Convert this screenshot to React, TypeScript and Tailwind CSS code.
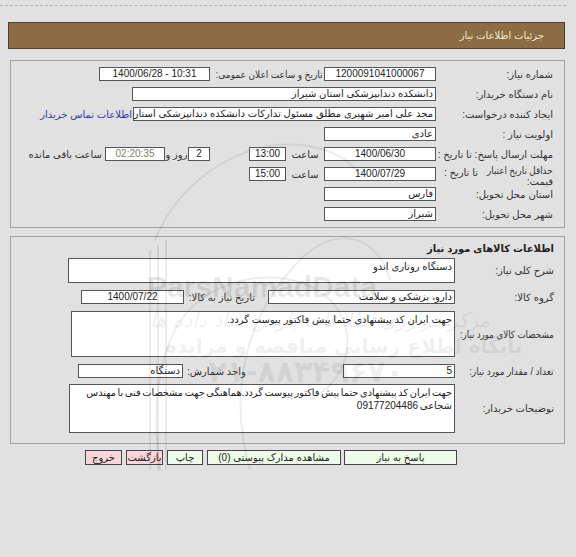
import React from "react";

type P = { className?: string; children?: React.ReactNode };

function Inp({ className = "", children }: P) {
  return (
    <div
      className={`h-[14px] shrink-0 overflow-hidden whitespace-nowrap border border-[#555] bg-white px-[2px] text-[10px] leading-[12px] text-[#222] ${className}`}
    >
      {children}
    </div>
  );
}

function L1({ children }: P) {
  return <div className="w-[117px] shrink-0 whitespace-nowrap text-right">{children}</div>;
}

function L2({ children }: P) {
  return <div className="w-[99px] shrink-0 whitespace-nowrap text-right">{children}</div>;
}

function Sq({ className = "", children }: P) {
  return <span className={`inline-block origin-right whitespace-nowrap ${className}`}>{children}</span>;
}

function Btn({ className = "", children }: P) {
  return (
    <div
      className={`h-[15px] shrink-0 whitespace-nowrap border border-[#444] text-center text-[10px] leading-[13px] text-[#222] ${className}`}
    >
      {children}
    </div>
  );
}

export default function App() {
  return (
    <div
      dir="rtl"
      className="relative h-[557px] w-[576px] overflow-hidden bg-[#e1e1e1] font-['Liberation_Sans','DejaVu_Sans',sans-serif] text-[10px] leading-[13px] text-[#333]"
    >
      <div className="pt-[5px]">
        <div className="mr-auto w-[566px] border-t border-dashed border-[#b0b0b0]" />
      </div>

      <div className="ml-[8px] mr-[11px] mt-[16px] flex h-[27px] items-center border border-[#4f4030] bg-[#8c6d43] pr-[20px] text-[10px] text-[#f3e9d2]">
        جزئیات اطلاعات نیاز
      </div>

      {/* section 1 */}
      <div className="ml-[10px] mr-[11px] mt-[11px] border border-[#a0a0a0] pb-[3px] pr-[11px] pt-[3px]">
        <div className="flex h-[20px] items-center">
          <L1>شماره نیاز:</L1>
          <Inp className="w-[112px] text-center">1200091041000067</Inp>
          <div className="mr-[2px] w-[110px] shrink-0 whitespace-nowrap text-right">
            <Sq className="scale-x-[0.9]">تاریخ و ساعت اعلان عمومی:</Sq>
          </div>
          <Inp className="mr-[2px] w-[111px] text-center">
            <span dir="ltr">1400/06/28 - 10:31</span>
          </Inp>
        </div>
        <div className="flex h-[20px] items-center">
          <L1>نام دستگاه خریدار:</L1>
          <Inp className="w-[304px] text-right">دانشکده دندانپزشکی استان شیراز</Inp>
        </div>
        <div className="flex h-[20px] items-center">
          <L1>ایجاد کننده درخواست:</L1>
          <Inp className="w-[303px] text-right">مجد علی امیر شهیری مطلق مسئول تدارکات دانشکده دندانپزشکی استان شیراز</Inp>
          <div className="mr-[1px] shrink-0 whitespace-nowrap text-[#3535b0]">اطلاعات تماس خریدار</div>
        </div>
        <div className="flex h-[20px] items-center">
          <L1>اولویت نیاز :</L1>
          <Inp className="w-[112px] text-right">عادی</Inp>
        </div>
        <div className="flex h-[20px] items-center">
          <L1>مهلت ارسال پاسخ: تا تاریخ :</L1>
          <Inp className="w-[112px] text-center">1400/06/30</Inp>
          <div className="w-[38px] shrink-0 text-center">ساعت</div>
          <Inp className="w-[37px] text-center">13:00</Inp>
          <Inp className="mr-[39px] w-[22px] text-center">2</Inp>
          <div className="w-[23px] shrink-0 whitespace-nowrap text-center">روز و</div>
          <Inp className="w-[60px] bg-[#efedc2] text-center text-[#808070]">02:20:35</Inp>
          <div className="mr-[3px] shrink-0 whitespace-nowrap">ساعت باقی مانده</div>
        </div>
        <div className="flex h-[20px] items-center">
          <div className="flex w-[117px] shrink-0 items-start">
            <div className="w-[70px] shrink-0 whitespace-nowrap pt-[3px] text-right leading-[11px]">
              <Sq className="scale-x-[0.88]">حداقل تاریخ اعتبار</Sq>
              <br />
              قیمت:
            </div>
            <div className="mr-[5px] shrink-0 whitespace-nowrap pt-[4px]">تا تاریخ :</div>
          </div>
          <Inp className="w-[112px] text-center">1400/07/29</Inp>
          <div className="w-[38px] shrink-0 text-center">ساعت</div>
          <Inp className="w-[37px] text-center">15:00</Inp>
        </div>
        <div className="flex h-[20px] items-center">
          <L1>استان محل تحویل:</L1>
          <Inp className="w-[112px] text-right">فارس</Inp>
        </div>
        <div className="flex h-[20px] items-center">
          <L1>شهر محل تحویل:</L1>
          <Inp className="w-[112px] text-right">شیراز</Inp>
        </div>
      </div>

      {/* section 2 */}
      <div className="ml-[10px] mr-[11px] mt-[8px] border border-[#a0a0a0] pb-[10px] pr-[10px] pt-[5px]">
        <div className="h-[14px] text-right font-bold leading-[14px] text-[#222]">اطلاعات کالاهای مورد نیاز</div>
        <div className="mt-[2px] flex items-center">
          <L2>شرح کلی نیاز:</L2>
          <div className="h-[25px] w-[387px] shrink-0 overflow-hidden border border-[#555] bg-white px-[2px] pt-[1px] text-right leading-[13px] text-[#222]">
            دستگاه روتاری اندو
          </div>
        </div>
        <div className="mt-[7px] flex items-center">
          <L2>گروه کالا:</L2>
          <Inp className="w-[187px] text-right">دارو، پزشکی و سلامت</Inp>
          <div className="w-[84px] shrink-0 whitespace-nowrap pr-[13px] text-right">تاریخ نیاز به کالا:</div>
          <Inp className="w-[103px] text-center">1400/07/22</Inp>
        </div>
        <div className="mt-[7px] flex items-center">
          <L2>
            <Sq className="scale-x-[0.87]">مشخصات کالای مورد نیاز:</Sq>
          </L2>
          <div className="h-[46px] w-[384px] shrink-0 overflow-hidden border border-[#555] bg-white px-[2px] pt-[1px] text-right leading-[13px] text-[#222]">
            جهت ایران کد پیشنهادی حتما پیش فاکتور پیوست گردد.
          </div>
        </div>
        <div className="mt-[7px] flex items-center">
          <L2>
            <Sq className="scale-x-[0.9]">تعداد / مقدار مورد نیاز:</Sq>
          </L2>
          <Inp className="w-[112px] text-right">5</Inp>
          <div className="w-[160px] shrink-0 whitespace-nowrap pl-[4px] text-left">واحد شمارش:</div>
          <Inp className="w-[105px] text-right">دستگاه</Inp>
        </div>
        <div className="mt-[6px] flex items-center">
          <L2>توضیحات خریدار:</L2>
          <div className="h-[49px] w-[386px] shrink-0 overflow-hidden whitespace-nowrap border border-[#555] bg-white px-[2px] pt-[1px] text-right leading-[13px] text-[#222] [word-spacing:-1px]">
            <Sq className="scale-x-[0.97]">جهت ایران کد پیشنهادی حتما پیش فاکتور پیوست گردد.هماهنگی جهت مشخصات فنی با مهندس</Sq>
            <br />
            شجاعی 09177204486
          </div>
        </div>
      </div>

      {/* buttons */}
      <div className="mt-[6px] flex pr-[119px]">
        <Btn className="w-[113px] bg-[#eefbea]">پاسخ به نیاز</Btn>
        <Btn className="mr-[3px] w-[134px] bg-[#eefbea]">مشاهده مدارک پیوستی (0)</Btn>
        <Btn className="mr-[4px] w-[36px] bg-[#eefbea]">چاپ</Btn>
        <Btn className="mr-[4px] w-[37px] bg-[#f8d6da]">بازگشت</Btn>
        <Btn className="mr-[4px] w-[37px] bg-[#f8d6da]">خروج</Btn>
      </div>

      {/* watermark */}
      <div className="pointer-events-none absolute inset-0">
        <svg className="absolute left-0 top-0" width="576" height="557" viewBox="0 0 576 557">
          <g fill="none" stroke="#000" strokeOpacity="0.07" strokeWidth="2">
            <path d="M160 470 C150 400 160 330 200 300 C240 270 300 270 330 300 C360 330 350 380 310 400" />
            <path d="M250 470 C230 400 240 320 300 260 C340 220 380 240 390 280" />
            <path d="M155 240 C180 180 240 140 300 145 C330 148 350 160 360 175" />
            <path d="M150 250 L150 470 M158 245 L158 470 M166 240 L166 470" />
          </g>
        </svg>
        <div
          dir="ltr"
          className="absolute left-[147px] top-[280px] font-['Liberation_Sans',sans-serif] text-[30px] font-bold text-black/[0.09]"
        >
          ParsNamadData
        </div>
        <div className="absolute left-[150px] top-[314px] whitespace-nowrap font-['DejaVu_Sans',sans-serif] text-[20px] italic text-black/[0.07]">
          مرکز فراوری اطلاعات پارس نماد داده ها
        </div>
        <div className="absolute left-[165px] top-[340px] whitespace-nowrap font-['DejaVu_Sans',sans-serif] text-[20px] font-bold text-black/[0.07]">
          پایگاه اطلاع رسانی مناقصه و مزایده
        </div>
        <div className="absolute left-[190px] top-[365px] whitespace-nowrap font-['DejaVu_Sans',sans-serif] text-[30px] font-bold text-black/[0.07]">
          ۰۲۱-۸۸۳۴۹۶۷۰
        </div>
      </div>
    </div>
  );
}
